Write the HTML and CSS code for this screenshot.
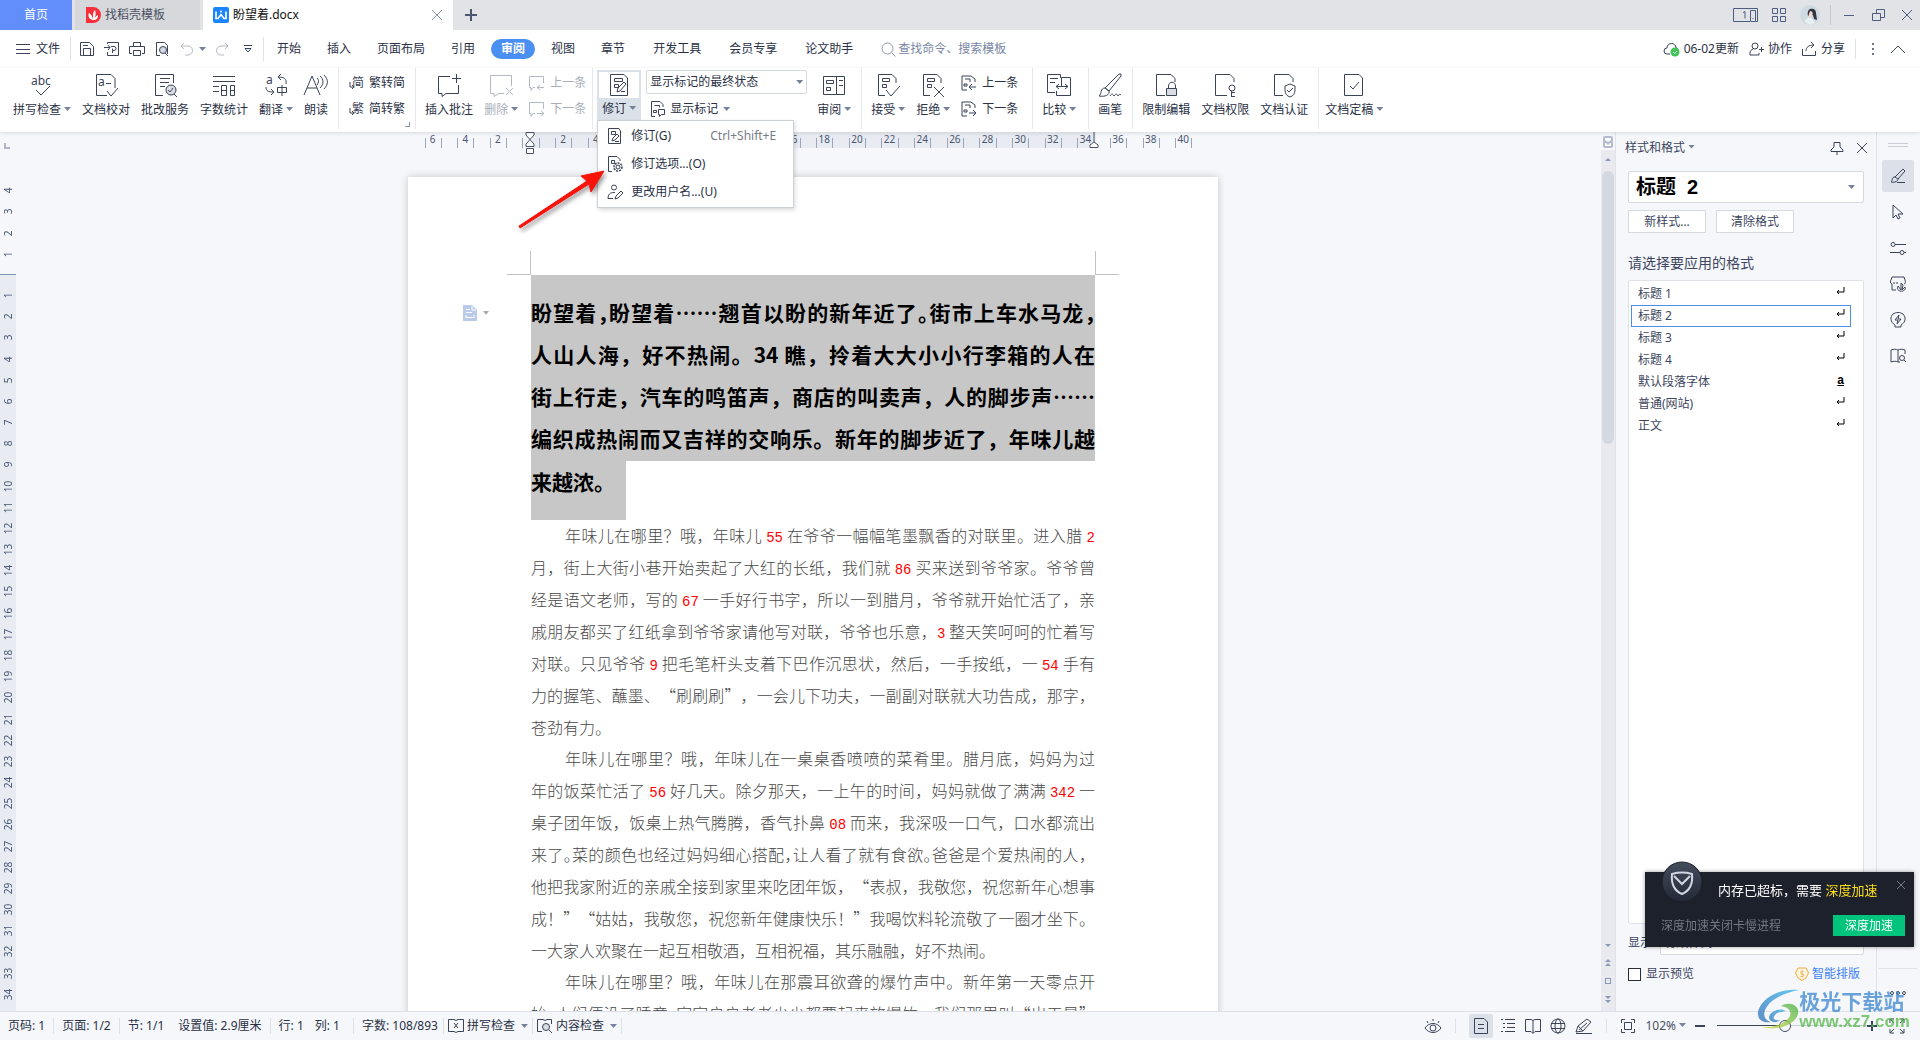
FILE: index.html
```html
<!DOCTYPE html>
<html lang="zh-CN">
<head>
<meta charset="utf-8">
<title>盼望着.docx</title>
<link rel="stylesheet" href="styles.css">
</head>
<body>
<svg class="defs" aria-hidden="true">
  <symbol id="next-s" viewBox="0 0 16 16"><path d="M6 15H1V1h9l4 3v3M4 4h5v3M3 9h3v2H3zM8 12h7M12 9l3 3-3 3"/></symbol>
  <symbol id="prev-s" viewBox="0 0 16 16"><path d="M6 15H1V1h9l4 3v3M4 4h5v3M3 9h3v2H3zM8 12h7M11 9l-3 3 3 3"/></symbol>
  <symbol id="ret" viewBox="0 0 10 10"><path d="M9 1v5H2M4 4L2 6l2 2"/></symbol>
</svg>

<header class="titlebar">
  <button class="home">首页</button>
  <button class="tab">
    <svg width="16" height="16" viewBox="0 0 16 16"><path fill="#f8303c" d="M1 0h7a8 8 0 0 1 0 16H1z"/><path fill="#fff" d="M8 13C3 12 3 8 4 6c2 1 3 3 4 6 0-5 0-7 2-9 1 3 1 6-1 9 1-2 2-3 4-4 0 3-1 5-5 5z"/></svg>
    找稻壳模板</button>
  <div class="tab current">
    <svg width="16" height="16" viewBox="0 0 16 16"><rect width="16" height="16" rx="2" fill="#1b85ff"/><path fill="none" stroke="#fff" stroke-width="1.600" d="M3 4.500v7h2l3-4 3 4h2v-7M7 4.500h2"/></svg>
    <span>盼望着.docx</span>
    <button class="close" aria-label="关闭标签"><svg width="12" height="12" viewBox="0 0 12 12"><path d="M1 1l10 10M11 1L1 11"/></svg></button>
  </div>
  <button class="plus" aria-label="新建"><svg width="12" height="12" viewBox="0 0 12 12"><path d="M6 0v12M0 6h12"/></svg></button>
  <div class="window">
    <svg width="25" height="16" viewBox="0 0 25 16"><path d="M17 14.500H.5v-13h24v13h-2M17.500 3.500h5v11h-5zM10 5.500l2-1v7M19.500 11.500h1"/></svg>
    <svg width="16" height="16" viewBox="0 0 16 16"><path d="M1.500 1.500h5v5h-5zM9.500 1.500h5v5h-5zM1.500 9.500h5v5h-5zM9.500 9.500h5v5h-5z"/></svg>
    <svg class="avatar" width="20" height="20" viewBox="0 0 20 20"><circle cx="10" cy="10" r="10" fill="#cddbe1"/><path fill="#33343e" d="M10 4c4-1 6 1 6 4l1 7-3-1-1-4-5 1c-1-3 0-6 2-7z"/><path fill="#efd9d2" d="M10 6c3 0 3 3 2 5l-2 2-2-1z"/><path fill="#e6f0f4" d="M5 17c0-4 3-5 7-4l3 5-5 2z"/></svg>
    <i class="bar"></i>
    <svg class="wb" width="12" height="12" viewBox="0 0 12 12"><path d="M1 6.500h10"/></svg>
    <svg class="wb" width="14" height="14" viewBox="0 0 14 14"><path d="M1.500 5.500h8v7h-8zM5.500 5V1.500h8v8h-4"/></svg>
    <svg class="wb" width="12" height="12" viewBox="0 0 12 12"><path d="M1 1l10 10M11 1L1 11"/></svg>
  </div>
</header>

<div class="menubar">
  <button class="file"><svg width="14" height="12" viewBox="0 0 14 12"><path d="M0 1.500h14M0 6.500h14M0 10.500h14"/></svg>文件</button>
  <i class="bar"></i>
  <div class="quick">
    <svg width="16" height="16" viewBox="0 0 16 16"><path d="M3.500 14.500h-2v-13h9l4 4v9h-11M4.500 14V7.500h7V14M4 4.500h5"/></svg>
    <svg width="16" height="16" viewBox="0 0 16 16"><path d="M3.500 3V1.500h11v13h-11V11M0 6.500h6M4 4l2 2.500L4 9M8.500 12V9.500M7 5.500h3a2 2 0 0 1 0 4H8.500v-2"/></svg>
    <svg width="16" height="16" viewBox="0 0 16 16"><path d="M4.500 5V1.500h7V5M3 12.500H.5v-7h15v7H13M4.500 9.500h7v5h-7z"/></svg>
    <svg width="16" height="16" viewBox="0 0 16 16"><path d="M6 14.500H2.500v-13h8l3 3V13"/><circle cx="9" cy="9" r="3.500" fill="#d5d9e1"/><path d="M11 12l3 3"/></svg>
    <svg class="off" width="15" height="16" viewBox="0 0 15 16"><path d="M5 2L2 5l3 3M2 5h7a4 4 0 0 1 0 9H6"/></svg>
    <i class="caret"></i>
    <svg class="off" width="15" height="16" viewBox="0 0 15 16"><path d="M10 2l3 3-3 3M13 5H6a4 4 0 0 0 0 9h3"/></svg>
    <svg class="more" width="10" height="10" viewBox="0 0 10 10"><path d="M1 1.500h8M2 4.500h6L5 8z"/></svg>
  </div>
  <i class="bar"></i>
  <nav class="tabs">
    <a href="#">开始</a><a href="#">插入</a><a href="#">页面布局</a><a href="#">引用</a><a href="#" class="on">审阅</a><a href="#">视图</a><a href="#">章节</a>
  </nav>
  <nav class="tabs extra"><a href="#">开发工具</a><a href="#">会员专享</a><a href="#">论文助手</a></nav>
  <label class="search"><svg width="15" height="15" viewBox="0 0 15 15"><circle cx="6.500" cy="6.500" r="5.500"/><path d="M10.500 10.500l4 4"/></svg><input type="text" placeholder="查找命令、搜索模板"></label>
  <div class="account">
    <button><svg width="17" height="16" viewBox="0 0 17 16"><path d="M7 13H4a3 3 0 0 1 0-6c0-6 9-6 9 0 1 0 2 1 2 2"/><circle cx="12" cy="11" r="4.500" fill="#3fc455" stroke="none"/><path d="M10 11l1.500 1.500L14 10" stroke="#fff"/></svg>06-02更新</button>
    <button><svg width="15" height="14" viewBox="0 0 15 14"><circle cx="6" cy="4" r="3"/><path d="M4 7c-2 1-3 2-3 4v2h9v-2M10 7.500h5M12.500 5v5"/></svg>协作</button>
    <button><svg width="15" height="14" viewBox="0 0 15 14"><path d="M.5 7v6.500h13V9M4 9c0-4 3-6 8-6M9 0l3 3-3 3"/></svg>分享</button>
    <i class="bar"></i>
    <svg width="4" height="14" viewBox="0 0 4 14"><path class="solid" d="M1 1h2v2H1zM1 6h2v2H1zM1 11h2v2H1z"/></svg>
    <svg width="16" height="10" viewBox="0 0 16 10"><path d="M1 9l7-7 7 7"/></svg>
  </div>
</div>

<div class="ribbon">
  <div class="group first">
    <button class="tool"><svg viewBox="0 0 24 24"><text x="1" y="12">abc</text><path d="M6 17l5 5 9-9"/></svg><span>拼写检查<i class="caret"></i></span></button>
    <button class="tool"><svg viewBox="0 0 24 24"><path d="M13 22.500H2.500v-21H17l4 4V15M12 10.500h5M13 18l4 5 7-8"/><text x="4" y="13">a</text></svg><span>文档校对</span></button>
    <button class="tool"><svg viewBox="0 0 24 24"><path d="M10 22.500H2.500v-21h18V10M7 5.500h10M7 9.500h9M7 13.500h5"/><circle cx="18" cy="17" r="5" fill="#d9dce3"/><path d="M15 17l2 2 3-4M21 21l3 3"/></svg><span>批改服务</span></button>
    <button class="tool"><svg viewBox="0 0 24 24"><path d="M1 3.500h22M1 8.500h22M1 13.500h6M1 18.500h6M9.500 12.500h5v10h-5zM18.500 12.500h4v10h-4zM10 17.500h5M18 17.500h5"/></svg><span>字数统计</span></button>
    <button class="tool"><svg viewBox="0 0 24 24"><text x="2" y="11">a</text><path d="M2 14c0 4 2 5 8 5M7 16l3 3-3 3M22 11c1-5-2-7-8-7M17 1l-3 3 3 3M13.500 14.500h9v5h-9zM18 12v11"/></svg><span>翻译<i class="caret"></i></span></button>
    <button class="tool"><svg viewBox="0 0 24 24"><path d="M0 22L8 3l8 19M3 15h10M13 5c2 2 2 4 0 7M16 3c4 3 4 8 0 12M20 2c5 5 4 10 0 14"/></svg><span>朗读</span></button>
  </div>
  <div class="group">
    <div class="pair">
      <button><svg viewBox="0 0 16 16"><text class="han" x="4" y="12">简</text><path d="M2 7v5h4M4 10l2 2-2 2"/></svg>繁转简</button>
      <button><svg viewBox="0 0 16 16"><text class="han" x="4" y="12">繁</text><path d="M2 7v5h4M4 10l2 2-2 2"/></svg>简转繁</button>
    </div>
    <i class="corner"></i>
  </div>
  <div class="group snug">
    <button class="tool"><svg viewBox="0 0 24 24"><path d="M13 3.500H1.500v17H5v3l4-3h12.500V12M19.500 1v9M15 5.500h9"/></svg><span>插入批注</span></button>
    <button class="tool" disabled><svg viewBox="0 0 24 24"><path d="M15 20.500h-5l-5 3v-3H1.500v-18h21V13M17 15l7 7M24 15l-7 7"/></svg><span>删除<i class="caret"></i></span></button>
    <div class="pair">
      <button disabled><svg viewBox="0 0 16 16"><path d="M6 12.500H4l-2 3v-3H.5v-11h14V8M8 12.500h7M11 10l-3 2.500 3 2.500"/></svg>上一条</button>
      <button disabled><svg viewBox="0 0 16 16"><path d="M6 12.500H4l-2 3v-3H.5v-11h14V8M8 12.500h7M12 10l3 2.500-3 2.500"/></svg>下一条</button>
    </div>
  </div>
  <div class="group revise">
    <div class="menu-host">
      <button class="tool open"><svg viewBox="0 0 24 24"><path d="M17 1.500H3.500v21h17V5zM7.500 5.500h8v3h-8zM7.500 11.500h4v3h-4zM10 19l1-4 6-6 2 2-6 7zM14 18.500h4"/></svg><span>修订<i class="caret"></i></span></button>
      <div class="menu" role="menu">
        <button role="menuitem"><svg viewBox="0 0 16 16"><path d="M12 .5H1.500v15h12V3zM4.500 3.500h4v3h-4zM5 13l1-3 4-4 2 2-4 4zM8 13.500h4"/></svg><span>修订(G)</span><kbd>Ctrl+Shift+E</kbd></button>
        <button role="menuitem"><svg viewBox="0 0 16 16"><path d="M5 15.500H1.500V.5H10l3 3V5M4.500 4.500h3v3h-3z"/><circle cx="11" cy="11" r="4" stroke-width="1.500" stroke-dasharray="2 1"/><circle cx="11" cy="11" r="2"/></svg><span>修订选项...(O)</span></button>
        <button role="menuitem"><svg viewBox="0 0 16 16"><circle cx="7" cy="3.500" r="2.500"/><path d="M6 14.500H1c0-4 2-6 6-6h1M8 15l1-3 5-5 2 2-5 5z"/></svg><span>更改用户名...(U)</span></button>
      </div>
      <svg class="arrow" viewBox="0 0 110 70" aria-hidden="true"><path d="M9 65L8 63 76 18 70 13 93 8 80 29 78 21z"/></svg>
    </div>
    <div class="stack">
      <div class="select"><select aria-label="显示方式"><option>显示标记的最终状态</option></select><i class="caret"></i></div>
      <button class="mark"><svg viewBox="0 0 16 16"><path d="M5 15.500H1.500V.5H10l3 3V6M4.500 4.500h5v2M3.500 9.500h3v2h-3zM8.500 8.500h6v5h-3l-2 2v-2h-1z"/></svg>显示标记<i class="caret"></i></button>
    </div>
    <button class="tool review"><svg viewBox="0 0 24 24"><path d="M1.500 3.500h21v18h-21zM14.500 4v17M4.500 7.500h7v3h-7zM4.500 14.500h4v3h-4zM17 7.500h4M17 12.500h4"/></svg><span>审阅<i class="caret"></i></span></button>
  </div>
  <div class="group wide">
    <button class="tool"><svg viewBox="0 0 24 24"><path d="M9 22.500H2.500v-21H16l4 4V10M6.500 5.500h7v3h-7zM6.500 11.500h4v3h-4zM10 17l5 6 9-10"/></svg><span>接受<i class="caret"></i></span></button>
    <button class="tool"><svg viewBox="0 0 24 24"><path d="M9 22.500H2.500v-21H16l4 4V10M6.500 5.500h7v3h-7zM6.500 11.500h4v3h-4zM13 14l10 10M23 14L13 24"/></svg><span>拒绝<i class="caret"></i></span></button>
    <div class="pair">
      <button><svg><use href="#prev-s"/></svg>上一条</button>
      <button><svg><use href="#next-s"/></svg>下一条</button>
    </div>
  </div>
  <div class="group compare">
    <button class="tool"><svg viewBox="0 0 24 24"><path d="M8 19.500H.5v-18h13V5M14.500 14V4.500h9v18h-14V18M3 5.500h8M3 9.500h5M9 13.500h12M12 11l-3 2.500 3 2.500M18 11l3 2.500-3 2.500"/></svg><span>比较<i class="caret"></i></span></button>
  </div>
  <div class="group">
    <button class="tool"><svg viewBox="0 0 24 24"><path d="M7 15L21 1h2v2L11 18zM7 15c-5 0-3 6-6 8 6 1 11-1 10-5zM12 23c2-3 3-2 4 0 2-3 3-2 4 0 1-2 2-2 3-1"/></svg><span>画笔</span></button>
  </div>
  <div class="group">
    <button class="tool"><svg viewBox="0 0 24 24"><path d="M11 22.500H2.500v-21H17l4 4V9M14.500 16v-3c0-5 7-5 7 0v3"/><path fill="#d9dce3" d="M12.500 15.500h10v7h-10z"/></svg><span>限制编辑</span></button>
    <button class="tool"><svg viewBox="0 0 24 24"><path d="M14 22.500H2.500v-21H17l4 4V9M18.500 18v6M18 19.500h4M18 23.500h4"/><circle cx="19" cy="15" r="3"/></svg><span>文档权限</span></button>
    <button class="tool"><svg viewBox="0 0 24 24"><path d="M11 22.500H2.500v-21H17l4 4V9M18 11l5 2v4c0 4-2 6-5 7-3-1-5-3-5-7v-4zM15 17l2 2 4-4"/></svg><span>文档认证</span></button>
  </div>
  <div class="group last">
    <button class="tool"><svg viewBox="0 0 24 24"><path d="M17 1.500H2.500v21h18V5zM8 13l3 3 6-7"/></svg><span>文档定稿<i class="caret"></i></span></button>
  </div>
</div>

<main class="work">
  <div class="vruler" aria-hidden="true">
    <i class="origin"></i>
    <div class="above"><b>4</b><b>3</b><b>2</b><b>1</b></div>
    <div class="below"><b>1</b><b>2</b><b>3</b><b>4</b><b>5</b><b>6</b><b>7</b><b>8</b><b>9</b><b>10</b><b>11</b><b>12</b><b>13</b><b>14</b><b>15</b><b>16</b><b>17</b><b>18</b><b>19</b><b>20</b><b>21</b><b>22</b><b>23</b><b>24</b><b>25</b><b>26</b><b>27</b><b>28</b><b>29</b><b>30</b><b>31</b><b>32</b><b>33</b><b>34</b></div>
  </div>
  <div class="canvas">
    <div class="hruler" aria-hidden="true">
      <b>6</b><b></b><b>4</b><b></b><b>2</b><b></b><b class="zero"><svg width="10" height="22" viewBox="0 0 10 22"><path d="M1 .5h8V3L1 12v2.500h8V12L1 3zM1.500 16.500h7v5h-7z"/></svg></b><b></b><b>2</b><b></b><b>4</b><b></b><b>6</b><b></b><b>8</b><b></b><b>10</b><b></b><b>12</b><b></b><b>14</b><b></b><b>16</b><b></b><b>18</b><b></b><b>20</b><b></b><b>22</b><b></b><b>24</b><b></b><b>26</b><b></b><b>28</b><b></b><b>30</b><b></b><b>32</b><b></b><b>34</b><b class="end"><svg width="10" height="16" viewBox="0 0 10 16"><path d="M5 0v10l4 3v2.500H1V13l4-3"/></svg></b><b>36</b><b></b><b>38</b><b></b><b>40</b>
    </div>
    <article class="page">
      <i class="crop left"></i><i class="crop right"></i>
      <svg class="section" width="36" height="16" viewBox="0 0 36 16"><path fill="#b9cbe9" d="M0 0h9l5 5v11H0z"/><path fill="none" stroke="#fff" d="M3 4.500h4M3 7.500h6M3 12.500h8M3 10v3M11 10v3M9 1v4h4"/><path fill="#a9adb5" d="M20 6h6l-3 4z"/></svg>
      <h2>
        <span class="sel"><span class="ln">盼望着<q>，</q>盼望着……翘首以盼的新年近了<q>。</q>街市上车水马龙<q>，</q></span><span class="ln">人山人海，好不热闹。34 瞧，拎着大大小小行李箱的人在</span><span class="ln">街上行走，汽车的鸣笛声，商店的叫卖声，人的脚步声……</span><span class="ln">编织成热闹而又吉祥的交响乐。新年的脚步近了，年味儿越</span></span><span class="sel tail">来越浓。</span>
      </h2>
      <p>
        <span class="ln in">年味儿在哪里？哦，年味儿 <em>55</em> 在爷爷一幅幅笔墨飘香的对联里。进入腊 <em>2</em></span>
        <span class="ln">月，街上大街小巷开始卖起了大红的长纸，我们就 <em>86</em> 买来送到爷爷家。爷爷曾</span>
        <span class="ln">经是语文老师，写的 <em>67</em> 一手好行书字，所以一到腊月，爷爷就开始忙活了，亲</span>
        <span class="ln">戚朋友都买了红纸拿到爷爷家请他写对联，爷爷也乐意，<em>3</em> 整天笑呵呵的忙着写</span>
        <span class="ln">对联。只见爷爷 <em>9</em> 把毛笔杆头支着下巴作沉思状，然后，一手按纸，一 <em>54</em> 手有</span>
        <span class="ln">力的握笔、蘸墨、“刷刷刷”，一会儿下功夫，一副副对联就大功告成，那字，</span>
        <span class="ln short">苍劲有力。</span>
      </p>
      <p>
        <span class="ln in">年味儿在哪里？哦，年味儿在一桌桌香喷喷的菜肴里。腊月底，妈妈为过</span>
        <span class="ln">年的饭菜忙活了 <em>56</em> 好几天。除夕那天，一上午的时间，妈妈就做了满满 <em>342</em> 一</span>
        <span class="ln">桌子团年饭，饭桌上热气腾腾，香气扑鼻 <em>08</em> 而来，我深吸一口气，口水都流出</span>
        <span class="ln">来了<q>。</q>菜的颜色也经过妈妈细心搭配<q>，</q>让人看了就有食欲<q>。</q>爸爸是个爱热闹的人，</span>
        <span class="ln">他把我家附近的亲戚全接到家里来吃团年饭，“表叔，我敬您，祝您新年心想事</span>
        <span class="ln">成！”“姑姑，我敬您，祝您新年健康快乐！”我喝饮料轮流敬了一圈才坐下。</span>
        <span class="ln short">一大家人欢聚在一起互相敬酒，互相祝福，其乐融融，好不热闹。</span>
      </p>
      <p>
        <span class="ln in">年味儿在哪里？哦，年味儿在那震耳欲聋的爆竹声中。新年第一天零点开</span>
        <span class="ln">始<q>，</q>人们便没了睡意<q>，</q>家家户户老老少少都要起来放爆竹，我们那里叫“出天星”</span>
      </p>
    </article>
  </div>
  <div class="scroll" aria-hidden="true">
    <svg class="top" width="10" height="12" viewBox="0 0 10 12"><rect width="10" height="12" rx="2" fill="#b5bccf"/><path fill="#fff" d="M2 2h6v2L5 6 2 4zM2 7h1l2 2 2-2h1v3H2z"/></svg>
    <div class="track">
      <svg width="8" height="5" viewBox="0 0 8 5"><path d="M1 4l3-3 3 3z"/></svg>
      <i class="thumb"></i>
      <svg class="down" width="8" height="5" viewBox="0 0 8 5"><path d="M1 1l3 3 3-3z"/></svg>
      <svg width="8" height="9" viewBox="0 0 8 9"><path d="M1 4l3-3 3 3zM1 8l3-3 3 3z"/></svg>
      <svg width="8" height="8" viewBox="0 0 8 8"><rect x="1.500" y="1.500" width="5" height="5" fill="none" stroke="#8d99b3"/></svg>
      <svg width="8" height="9" viewBox="0 0 8 9"><path d="M1 1l3 3 3-3zM1 5l3 3 3-3z"/></svg>
    </div>
  </div>
  <aside class="panel">
    <div class="phead"><span>样式和格式<i class="caret"></i></span>
      <svg width="14" height="14" viewBox="0 0 14 14"><path d="M4 1.500h6V6l3 3v1.500H1V9l3-3zM7 10v4"/></svg>
      <svg width="12" height="12" viewBox="0 0 12 12"><path d="M1 1l10 10M11 1L1 11"/></svg></div>
    <div class="select style"><select aria-label="当前样式"><option>标题&nbsp; 2</option></select><i class="caret"></i></div>
    <div class="btns"><button>新样式...</button><button>清除格式</button></div>
    <h3>请选择要应用的格式</h3>
    <ul class="styles">
      <li>标题 1<svg><use href="#ret"/></svg></li>
      <li class="on">标题 2<svg><use href="#ret"/></svg></li>
      <li>标题 3<svg><use href="#ret"/></svg></li>
      <li>标题 4<svg><use href="#ret"/></svg></li>
      <li>默认段落字体<u>a</u></li>
      <li>普通(网站)<svg><use href="#ret"/></svg></li>
      <li>正文<svg><use href="#ret"/></svg></li>
    </ul>
    <div class="show"><label for="show">显示:</label><div class="select"><select id="show"><option>有效样式</option></select></div></div>
    <div class="preview"><label><input type="checkbox">显示预览</label>
      <a href="#"><svg width="14" height="14" viewBox="0 0 14 14"><path fill="#fff6e2" stroke="#f0a93a" d="M3 1h8l2.500 5L11 11l-4 2.500L3 11 .5 6z"/><text x="5" y="10">$</text></svg>智能排版</a></div>
  </aside>
  <div class="side">
    <i class="grip"></i>
    <button class="on" aria-label="样式"><svg viewBox="0 0 16 16"><path d="M5 9l8-8 2 2-7 8zM5 9c-4 0-2 4-4 5 4 1 7-1 7-3M7 14.500h8"/></svg></button>
    <button aria-label="选择"><svg viewBox="0 0 16 16"><path d="M3 1v13l3-3 2 4 2-1-2-4h5z"/></svg></button>
    <button aria-label="属性"><svg viewBox="0 0 16 16"><circle cx="3" cy="4.500" r="2"/><circle cx="12" cy="12.500" r="2"/><path d="M5 4.500h11M0 12.500h10M14 12.500h2"/></svg></button>
    <button aria-label="资源"><svg viewBox="0 0 16 16"><path d="M6 14H2V8C0 7 0 5 1 4l1-3h12l1 3c1 2 0 4-1 4M4 6v2M7 6v2M10 15c-3-1-3-3-2-5l3 4V7l2 2-1 5 3-3c1 2-1 5-5 4z"/></svg></button>
    <button aria-label="助手"><svg viewBox="0 0 16 16"><path d="M5 13C0 10 0 5 3 2c3-2 7-2 10 0 3 3 3 8-2 11v2H5zM9 3L5 8h3l-1 4 4-5H8z"/></svg></button>
    <button aria-label="阅读"><svg viewBox="0 0 16 16"><path d="M8 14c-2-1-4-1-7 0V2c3-1 5-1 7 0v12M8 2c2-1 4-1 7 0v4M8 14h2"/><circle cx="12" cy="10" r="2.500"/><path d="M14 12l2 2"/></svg></button>
    <i class="rule"></i>
    <svg class="dots" width="16" height="6" viewBox="0 0 16 6"><circle cx="2" cy="3" r="1.500"/><circle cx="8" cy="3" r="1.500"/><circle cx="14" cy="3" r="1.500"/></svg>
  </div>
</main>

<footer class="status">
  <span>页码: 1</span><span>页面: 1/2</span><span>节: 1/1</span><span>设置值: 2.9厘米</span><span>行: 1</span><span class="col">列: 1</span><span>字数: 108/893</span>
  <button><svg width="16" height="16" viewBox="0 0 16 16"><path d="M6 1.500H.5v12H6l2 1 2-1h5.500v-12H10l-2 1zM6 5l4 5M10 5l-4 5"/></svg>拼写检查<i class="caret"></i></button>
  <button><svg width="16" height="16" viewBox="0 0 16 16"><path d="M5 13.500H.5v-12H6l2 1 2-1h4.500V6M12 12l3 3"/><circle cx="9" cy="9" r="3.500" fill="#d9dce3"/></svg>内容检查<i class="caret"></i></button>
  <div class="views">
    <svg width="18" height="16" viewBox="0 0 18 16"><path d="M1 10c4-6 12-6 16 0-4 6-12 6-16 0M9 1v2M3 3l1 2M15 3l-1 2"/><circle cx="9" cy="10" r="3"/></svg>
    <i class="bar"></i>
    <button class="on" aria-label="页面视图"><svg width="16" height="16" viewBox="0 0 16 16"><path d="M11 .5H1.500v15h13V4zM5 6.500h6M5 10.500h6"/></svg></button>
    <svg width="16" height="16" viewBox="0 0 16 16"><path d="M1 1.500h2M5 1.500h10M3 5.500h2M7 5.500h8M3 9.500h2M7 9.500h8M1 13.500h2M5 13.500h10"/></svg>
    <svg width="16" height="16" viewBox="0 0 16 16"><path d="M6 13.500H.5v-12H6l2 1 2-1h5.500v12H10l-2 2zM8 3v12"/></svg>
    <svg width="16" height="16" viewBox="0 0 16 16"><circle cx="8" cy="8" r="7"/><ellipse cx="8" cy="8" rx="3" ry="7"/><path d="M1 5.500h14M1 10.500h14"/></svg>
    <svg width="18" height="16" viewBox="0 0 18 16"><path d="M1 14l2-6 9-7 4 3-8 9zM3 8l5 5M4 12l8-7M1 15.500h16"/></svg>
    <i class="bar"></i>
    <svg width="16" height="16" viewBox="0 0 16 16"><path d="M1.500 5V1.500H5M11 1.500h3.500V5M14.500 11v3.500H11M5 14.500H1.500V11M4.500 4.500h7v7h-7z"/></svg>
    <span class="zoom">102%<i class="caret"></i></span>
    <button class="step" aria-label="缩小"><svg width="10" height="10" viewBox="0 0 10 10"><path d="M0 5h10"/></svg></button>
    <input type="range" min="0" max="100" value="44" aria-label="缩放">
    <button class="step" aria-label="放大"><svg width="10" height="10" viewBox="0 0 10 10"><path d="M0 5h10M5 0v10"/></svg></button>
    <svg class="full" width="16" height="16" viewBox="0 0 16 16"><path d="M1 5V1h4M11 1h4v4M15 11v4h-4M5 15H1v-4M1 1l4 4M15 1l-4 4M15 15l-4-4M1 15l4-4"/></svg>
  </div>
</footer>

<div class="toast" role="alert">
  <svg class="badge" width="42" height="42" viewBox="0 0 42 42"><defs><linearGradient id="bg" x2="0" y2="1"><stop stop-color="#454c5c"/><stop offset="1" stop-color="#222836"/></linearGradient></defs><circle cx="21" cy="21" r="20" fill="url(#bg)" stroke="#1a1f2a"/><path fill="none" stroke="#d3d6e0" stroke-width="2" d="M11 13c7-2 13-2 20 0 1 10-3 17-10 20C14 30 10 23 11 13zM13 15l8 8 8-8"/></svg>
  <button class="x" aria-label="关闭"><svg width="10" height="10" viewBox="0 0 10 10"><path d="M1 1l8 8M9 1L1 9"/></svg></button>
  <p class="msg">内存已超标，需要 <strong>深度加速</strong></p>
  <div class="act"><span>深度加速关闭卡慢进程</span><button>深度加速</button></div>
</div>

<div class="mark-site" aria-hidden="true">
  <svg width="42" height="42" viewBox="0 0 42 42"><defs><linearGradient id="sw" x1="1" x2="0" y2="1"><stop stop-color="#35b5ee"/><stop offset="1" stop-color="#2b6db5"/></linearGradient><linearGradient id="gr" x1="1" x2="0" y2="1"><stop stop-color="#3fae49"/><stop offset="1" stop-color="#d4de3c"/></linearGradient></defs><path fill="url(#sw)" d="M42 1C18-2 0 14 1 26c1 6 6 8 13 7-6-2-8-6-6-12C12 11 26 4 42 1z"/><path fill="url(#gr)" d="M24 17c8-5 19-1 17 8-2 9-18 18-36 13 14 1 25-5 28-11 2-6-3-9-9-10z"/><path fill="url(#sw)" d="M29 22c-5-4-16 0-17 6 0 5 7 7 11 3-6 1-8-2-5-5 2-3 6-3 11-4z"/></svg>
  <div><b>极光下载站</b><span>www.xz7.com</span></div>
</div>
</body>
</html>
```
FILE: styles.css
```css
* { box-sizing: border-box; }
html, body { height: 100%; overflow: hidden; }
body {
  margin: 0;
  display: flex;
  flex-direction: column;
  background: #f5f7fa;
  color: #2a3146;
  font: 12px/16px "Noto Sans", "Noto Sans CJK SC", sans-serif;
}
button, input, select { font: inherit; color: inherit; }
button { background: none; border: 0; padding: 0; white-space: nowrap; }
a { color: inherit; text-decoration: none; }
svg { fill: none; stroke: #3b4358; flex: none; display: block; overflow: visible; }
svg text { fill: #3b4358; stroke: none; font-size: 12px; }
.defs { position: absolute; top: 0; left: 0; width: 0; height: 0; overflow: hidden; }
.caret {
  display: inline-block;
  width: 7px;
  height: 4px;
  margin-left: 3px;
  vertical-align: 3px;
  background: #76829b;
  clip-path: polygon(0 0, 100% 0, 50% 100%);
  flex: none;
}
.bar { width: 1px; background: #dfe2e8; flex: none; }

/* Title bar */
.titlebar { display: flex; height: 30px; background: #e2e3e7; flex: none; }
.home { width: 72px; background: #628efb; color: #fff; margin-right: 3px; }
.tab { display: flex; align-items: center; gap: 4px; width: 125px; padding-left: 10px; background: #d7d8db; margin-right: 3px; color: #4a5061; }
.tab svg { stroke: none; }
.tab.current { width: 250px; background: #fff; color: #111; margin-right: 0; }
.tab .close { margin-left: auto; margin-right: 10px; }
.tab .close svg { stroke: #8c98b3; }
.plus { margin-left: 12px; }
.plus svg { stroke: #4c5671; stroke-width: 2; }
.window { margin-left: auto; display: flex; align-items: center; padding-right: 7px; }
.window svg { stroke: #4d5c80; margin-right: 13px; }
.window .avatar { stroke: none; margin: 0 10px 0 0; }
.window .bar { height: 20px; background: #c6c9d1; }
.window .wb { margin: 0 0 0 12px; }
.window .wb + .wb { margin-left: 16px; }

/* Menu bar */
.menubar { display: flex; align-items: center; height: 38px; background: #fff; padding: 0 14px 0 16px; flex: none; }
.menubar > .bar { height: 24px; }
.file { display: flex; align-items: center; gap: 6px; margin-right: 10px; }
.quick { display: flex; align-items: center; gap: 9px; padding: 0 8px; }
.quick .off { stroke: #b3b8c3; }
.quick .caret { margin: 0 0 0 -4px; }
.quick .more { margin: 0 2px 0 4px; }
.tabs { display: flex; gap: 6px; margin-left: 3px; white-space: nowrap; }
.tabs a { padding: 2px 10px; border-radius: 10px; }
.tabs .on { background: #4a8ff2; color: #fff; font-weight: 700; }
.tabs.extra { gap: 8px; margin-left: 8px; }
.search { display: flex; align-items: center; gap: 2px; margin-left: 18px; }
.search svg { stroke: #8e99ae; }
.search input { width: 130px; border: 0; padding: 0; outline: 0; background: none; }
.search input::placeholder { color: #7886a3; opacity: 1; }
.account { margin-left: auto; display: flex; align-items: center; gap: 10px; }
.account button { display: flex; align-items: center; gap: 4px; }
.account .bar { height: 20px; }
.account > svg { margin-left: 5px; }
.solid { fill: #6b7386; stroke: none; }

/* Ribbon */
.ribbon { display: flex; height: 64px; background: #fff; flex: none; position: relative; z-index: 3; box-shadow: 0 1px 4px rgba(0, 0, 0, .12); }
.group { display: flex; gap: 11px; padding: 2px 10px 0 9px; margin-bottom: 3px; border-right: 1px solid #e6e8ed; position: relative; }
.group.first { padding-left: 13px; }
.group.snug { padding-right: 6px; }
.group.wide { padding-right: 14px; }
.group.compare { padding-right: 12px; }
.group.last { padding-left: 6px; border: 0; }
.tool { display: flex; flex-direction: column; align-items: center; gap: 5px; padding-top: 3px; height: 52px; }
.tool > svg { width: 24px; height: 24px; }
.tool span { line-height: 16px; }
.pair { display: flex; flex-direction: column; gap: 10px; padding-top: 5px; }
.pair button, .mark { display: flex; align-items: center; gap: 5px; }
.pair svg, .mark svg { width: 16px; height: 16px; }
.ribbon button:disabled { color: #a9aeb9; }
.ribbon button:disabled svg { stroke: #b3b8c3; }
.corner { position: absolute; right: 5px; bottom: 2px; width: 5px; height: 5px; border: solid #8c96ab; border-width: 0 1px 1px 0; }
.group.revise { padding-left: 4px; gap: 5px; }
.menu-host { position: relative; }
.tool.open { width: 44px; height: 50px; padding-top: 1px; gap: 4px; border: 2px solid #dbe1e8; border-bottom: 0; background: linear-gradient(#fff 26px, #dbe1e8 26px); }
.stack { display: flex; flex-direction: column; gap: 7px; }
.select { position: relative; display: flex; }
.select select { appearance: none; flex: 1; width: 161px; height: 24px; padding: 0 3px; border: 1px solid #d5d9e0; border-radius: 2px; background: #fff; }
.select .caret { position: absolute; right: 4px; top: 10px; }
.mark { padding-left: 4px; gap: 4px; }
.mark .caret { margin-left: 1px; }
.review { margin-left: 5px; }

.menu { position: absolute; left: 0; top: 50px; width: 197px; padding: 1px 0; background: #fff; border: 1px solid #cdd1d8; box-shadow: 1px 2px 4px rgba(0, 0, 0, .15); }
.menu button { display: flex; align-items: center; width: 100%; height: 28px; padding: 0 17px 0 9px; gap: 8px; text-align: left; }
.menu svg { width: 16px; height: 16px; }
.menu kbd { margin-left: auto; font: inherit; color: #777c88; }
.arrow { position: absolute; left: -86px; top: 93px; width: 110px; height: 70px; filter: drop-shadow(2px 3px 2px rgba(0, 0, 0, .4)); }
.arrow path { fill: #f81208; stroke: #f81208; }

/* Workspace */
.work { flex: 1; min-height: 0; display: flex; overflow: hidden; }
.vruler { width: 16px; overflow: hidden; color: #4a5672; font-size: 10px; line-height: 12px; flex: none; }
.vruler b, .hruler b { font-weight: 400; }
.origin { display: block; width: 6px; height: 6px; margin: 11px 0 31px 4px; border: solid #b0b6c4; border-width: 0 0 2px 2px; }
.above, .below { display: grid; grid-auto-rows: 1fr; }
.above { height: 85px; }
.below { height: 741px; margin-top: 9px; padding: 10px 0; background: #e8ebf1; border-top: 1px solid #8392b0; }
.vruler b { writing-mode: vertical-rl; transform: rotate(180deg); display: flex; align-items: center; justify-content: center; }

.canvas { flex: 1; min-width: 0; overflow: hidden; padding-left: 9px; }
.hruler { display: grid; grid-template-columns: repeat(47, 1fr); width: 767px; height: 16px; margin: 0 auto 29px; transform: translateX(-5px); background: linear-gradient(#e8ebf1, #e8ebf1) 107px 0 / 564px 16px no-repeat; color: #4a5672; font-size: 10px; line-height: 15px; text-align: center; }
.hruler b { position: relative; }
.hruler b::before { content: ""; position: absolute; left: 0; top: 6px; width: 1px; height: 10px; background: #98a5bd; }
.hruler b:last-child::after { content: ""; position: absolute; right: 0; top: 6px; width: 1px; height: 10px; background: #98a5bd; }
.hruler svg { position: absolute; left: 3px; top: 0; fill: #fff; stroke: #4a5368; }
.hruler .end::before { display: none; }
.hruler .end svg { left: -5px; }

.page { position: relative; width: 810px; height: 1145px; margin: 0 auto; padding: 98px 123px 0; background: #fff; box-shadow: 0 0 8px rgba(0, 0, 0, .2); color: #484848; font: 300 16px/32px "Noto Sans CJK SC", sans-serif; text-spacing-trim: space-all; }
.page h2 { margin: 0; }
.page p { margin: -1px 0 0; }
.crop { position: absolute; top: 74px; width: 24px; height: 24px; border: solid #c2c2c2; border-width: 0 0 1px; }
.crop.left { left: 99px; border-right-width: 1px; }
.crop.right { right: 99px; border-left-width: 1px; }
.section { position: absolute; left: 55px; top: 128px; stroke: none; }
.ln { display: block; text-align: justify; text-align-last: justify; white-space: nowrap; }
.ln.short { text-align-last: left; }
.ln.in { padding-left: 34px; }
.ln em { font: 14px/16px "Liberation Mono", monospace; color: #f00; }
q { quotes: none; font-feature-settings: "halt"; }
.page h2 { color: #000; font-size: 21px; font-weight: 700; line-height: 42px; }
.sel { display: block; padding: 16px 0 2px; background: #c7c7c7; }
.sel.tail { width: 95px; height: 59px; padding: 0; line-height: 40px; white-space: nowrap; }

.scroll { width: 14px; display: flex; flex-direction: column; align-items: center; flex: none; }
.scroll .top { stroke: none; margin: 4px 0 2px; }
.track { flex: 1; width: 14px; display: flex; flex-direction: column; align-items: center; gap: 10px; padding: 7px 0; background: #e8eaf0; }
.track svg { fill: #8d99b3; stroke: none; }
.thumb { width: 12px; height: 273px; margin-top: -1px; border-radius: 6px; background: #d4d8e1; }
.track .down { margin-top: auto; }

/* Style panel */
.panel { width: 262px; flex: none; display: flex; flex-direction: column; padding: 0 12px; border: solid #dfe2e8; border-width: 0 1px; color: #3d4560; }
.phead { display: flex; align-items: center; height: 31px; gap: 12px; margin: 0 -4px 0 -3px; }
.phead span { margin-right: auto; }
.style { margin: 8px 0 7px; }
.style select { height: 32px; padding: 0 7px; color: #000; font: 700 20px "Liberation Sans", "Noto Sans CJK SC", sans-serif; }
.style .caret { right: 9px; top: 14px; }
.btns { display: flex; gap: 10px; }
.btns button { width: 78px; height: 23px; background: #fff; border: 1px solid #d5d9e0; }
.panel h3 { margin: 19px 0 6px; font-weight: 400; font-size: 14px; line-height: 22px; }
.styles { flex: 1; margin: 0; padding: 2px; list-style: none; background: #fff; border: 1px solid #dfe2e8; border-radius: 2px; }
.styles li { display: flex; justify-content: space-between; width: 220px; height: 22px; padding: 2px 5px 0 6px; border: 1px solid transparent; }
.styles .on { border-color: #4a90ea; }
.styles svg { width: 10px; height: 10px; stroke: #000; }
.styles u { color: #000; font: 700 12px/12px "Liberation Sans", sans-serif; margin-right: 1px; }
.show { display: flex; align-items: center; gap: 5px; margin-top: 7px; }
.show .select { flex: 1; }
.show label { white-space: nowrap; }
.preview { display: flex; justify-content: space-between; align-items: center; height: 26px; margin: 6px 4px 24px 0; }
.preview label, .preview a { display: flex; align-items: center; gap: 3px; }
.preview a { color: #3d7ff5; }
.preview a text { font-size: 8px; fill: #f0a93a; }
.preview input { appearance: none; width: 13px; height: 13px; margin: 0 2px 0 0; border: 1px solid #2a2d38; background: #fff; }

.side { width: 43px; flex: none; display: flex; flex-direction: column; align-items: center; gap: 4px; padding: 11px 2px 0 0; }
.grip { width: 20px; height: 4px; border: solid #c9cdd6; border-width: 1px 0; margin-bottom: 9px; }
.side button { width: 32px; height: 32px; display: grid; place-items: center; border-radius: 2px; }
.side button svg { width: 16px; height: 16px; }
.side .on { background: #dbe0e9; }
.rule { width: 38px; height: 1px; margin-top: auto; background: #dfe2e8; }
.dots { margin: 17px 0 15px; }

/* Status bar */
.status { display: flex; align-items: center; height: 29px; flex: none; border-top: 1px solid #dde0e6; white-space: nowrap; }
.status > span, .status > button { height: 16px; padding: 0 8px; border-right: 1px solid #dde0e6; }
.status > span:nth-child(3) { border-right: 0; padding-right: 6px; }
.status > span:nth-child(5) { border-right: 0; padding-right: 3px; }
.status > .col { padding-right: 13px; }
.status > span:nth-child(7) { padding-right: 5px; }
.status > button { display: flex; align-items: center; gap: 3px; padding: 0 4px; }
.views { margin-left: auto; display: flex; align-items: center; gap: 9px; padding-right: 15px; }
.views .bar { height: 14px; margin: 0 4px; }
.views .on { width: 24px; height: 24px; display: grid; place-items: center; background: #dbe0e9; border-radius: 2px; margin-right: -2px; }
.zoom { color: #4a5164; }
.step svg { stroke-width: 2; }
.views input { appearance: none; width: 154px; height: 14px; margin: 0 -13px 0 3px; background: linear-gradient(90deg, #3b4358 44%, #c9cdd6 44%) 0 6px / 100% 1px no-repeat; }
.views input::-webkit-slider-thumb { appearance: none; width: 12px; height: 12px; border: 1px solid #4a5164; border-radius: 50%; background: #f5f7fa; }
.full { margin-left: 3px; }

/* Floating notice */
.toast { position: fixed; right: 6px; bottom: 93px; width: 269px; height: 75px; z-index: 5; display: flex; flex-direction: column; justify-content: space-between; padding: 8px 9px 11px 16px; background: #1d212b; color: #fff; box-shadow: 0 0 4px rgba(0, 0, 0, .4); }
.toast .badge { position: absolute; left: 16px; top: -11px; stroke: none; }
.toast .x { position: absolute; right: 8px; top: 8px; }
.toast .x svg { stroke: #777c88; }
.toast .msg { margin: 0; padding-left: 57px; font-size: 13px; line-height: 20px; white-space: nowrap; }
.toast strong { font-weight: 400; color: #f9dc1c; }
.act { display: flex; align-items: center; justify-content: space-between; color: #747883; }
.act button { width: 72px; height: 21px; background: #00c37c; color: #fff; }

.mark-site { position: fixed; right: 10px; bottom: 9px; z-index: 6; display: flex; align-items: center; opacity: .75; pointer-events: none; }
.mark-site svg { stroke: none; }
.mark-site div { display: flex; flex-direction: column; }
.mark-site b { font-size: 21px; line-height: 24px; color: #3a86cf; }
.mark-site span { font: 700 17px/18px "Liberation Sans", sans-serif; color: #55b848; }
```
